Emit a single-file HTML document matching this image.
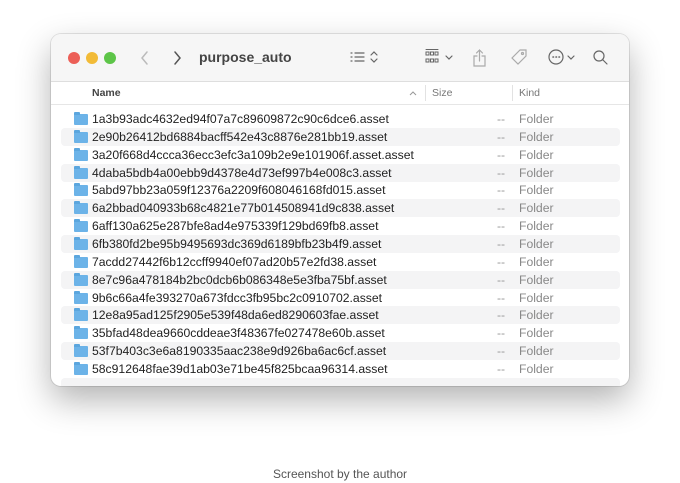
<!DOCTYPE html>
<html><head><style>
body{margin:0;width:680px;height:483px;background:#fff;font-family:"Liberation Sans",sans-serif;position:relative;overflow:hidden}
.win{position:absolute;left:51px;top:34px;width:578px;height:352px;border-radius:10px;background:#fff;box-shadow:0 14px 34px rgba(0,0,0,.3),0 0 0 1px rgba(0,0,0,.1);overflow:hidden}
.tb{position:absolute;left:0;top:0;width:100%;height:47px;background:#f6f6f6;border-bottom:1px solid #dedede}
.dot{position:absolute;top:18px;width:12px;height:12px;border-radius:50%}
.title{position:absolute;left:148px;top:15px;font-size:14px;font-weight:bold;color:#444}
.hdr{position:absolute;top:48px;left:0;width:100%;height:22px;border-bottom:1px solid #e6e6e6;font-size:10.5px;color:#777}
.row{position:absolute;left:10px;width:559px;height:18px;font-size:12.2px;color:#222;border-radius:4px}
.row.s{background:#f4f4f5}
.row .n{position:absolute;left:31px;top:2px}
.row .d{position:absolute;left:436px;top:2px;color:#999}
.row .k{position:absolute;left:458px;top:2px;color:#888}
.ic{position:absolute;left:13px;top:4px;width:14px;height:11px;background:#6cb3e8;border-radius:1px}
.ic:before{content:"";position:absolute;left:0;top:-2px;width:6px;height:3px;background:#5ba6de;border-radius:1px 1px 0 0}
.cap{position:absolute;top:467px;width:100%;text-align:center;font-size:12px;color:#555}
</style></head><body>
<div class="win">
<div class="tb">
<div class="dot" style="left:17px;background:#ec5f57"></div>
<div class="dot" style="left:35px;background:#f2bb37"></div>
<div class="dot" style="left:53px;background:#5dc548"></div>
<svg style="position:absolute;left:88px;top:15px" width="100" height="18" fill="none" stroke-width="1.5" stroke-linecap="round"><path d="M8 3 L3 9 L8 15" stroke="#bbb"/><path d="M36 3 L41 9 L36 15" stroke="#555"/></svg>
<div class="title">purpose_auto</div>
<svg style="position:absolute;left:298px;top:14px" width="270" height="20" fill="none" stroke="#666" stroke-width="1.2" stroke-linecap="round">
<path d="M2 5h1M2 9h1M2 13h1M6 5h9M6 9h9M6 13h9"/><path d="M22 7l3-3 3 3M22 11l3 3 3-3"/>
<g stroke-width="1"><rect x="77" y="4" width="3" height="3"/><rect x="81.5" y="4" width="3" height="3"/><rect x="86" y="4" width="3" height="3"/><rect x="77" y="11" width="3" height="3"/><rect x="81.5" y="11" width="3" height="3"/><rect x="86" y="11" width="3" height="3"/><path d="M77 1.5h12"/></g><path d="M97 8l3 3 3-3"/>
<path d="M128 8h-3v10h11V8h-3M130.5 13V2M127.5 5l3-3 3 3" stroke="#aaa"/>
<path d="M163 10l8-8h6v6l-8 8z" stroke="#aaa"/><circle cx="173.5" cy="5.5" r="1" stroke="#aaa"/>
<circle cx="207" cy="9" r="7"/><path d="M204 9h.5M207 9h.5M210 9h.5" stroke-width="1.6"/><path d="M219 8l3 3 3-3"/>
<circle cx="250" cy="8" r="5"/><path d="M254 12l4 4"/>
</svg>
</div>
<div class="hdr">
<span style="position:absolute;left:41px;top:5px;font-weight:bold;color:#444">Name</span>
<svg style="position:absolute;left:357px;top:7px" width="10" height="8" fill="none" stroke="#999"><path d="M2 6l3-3 3 3"/></svg>
<div style="position:absolute;left:374px;top:3px;width:1px;height:16px;background:#e2e2e2"></div>
<span style="position:absolute;left:381px;top:5px">Size</span>
<div style="position:absolute;left:461px;top:3px;width:1px;height:16px;background:#e2e2e2"></div>
<span style="position:absolute;left:468px;top:5px">Kind</span>
</div>
<div id="rows"></div>
</div>
<div class="cap">Screenshot by the author</div>
<script>
var n=["1a3b93adc4632ed94f07a7c89609872c90c6dce6.asset","2e90b26412bd6884bacff542e43c8876e281bb19.asset","3a20f668d4ccca36ecc3efc3a109b2e9e101906f.asset.asset","4daba5bdb4a00ebb9d4378e4d73ef997b4e008c3.asset","5abd97bb23a059f12376a2209f608046168fd015.asset","6a2bbad040933b68c4821e77b014508941d9c838.asset","6aff130a625e287bfe8ad4e975339f129bd69fb8.asset","6fb380fd2be95b9495693dc369d6189bfb23b4f9.asset","7acdd27442f6b12ccff9940ef07ad20b57e2fd38.asset","8e7c96a478184b2bc0dcb6b086348e5e3fba75bf.asset","9b6c66a4fe393270a673fdcc3fb95bc2c0910702.asset","12e8a95ad125f2905e539f48da6ed8290603fae.asset","35bfad48dea9660cddeae3f48367fe027478e60b.asset","53f7b403c3e6a8190335aac238e9d926ba6ac6cf.asset","58c912648fae39d1ab03e71be45f825bcaa96314.asset"];
var h="";for(var i=0;i<16;i++){var t=76+i*17.86;h+='<div class="row'+(i%2?' s':'')+'" style="top:'+t+'px">'+(i<15?'<div class="ic"></div><span class="n">'+n[i]+'</span><span class="d">--</span><span class="k">Folder</span>':'')+'</div>';}
document.getElementById("rows").innerHTML=h;
</script>
</body></html>
